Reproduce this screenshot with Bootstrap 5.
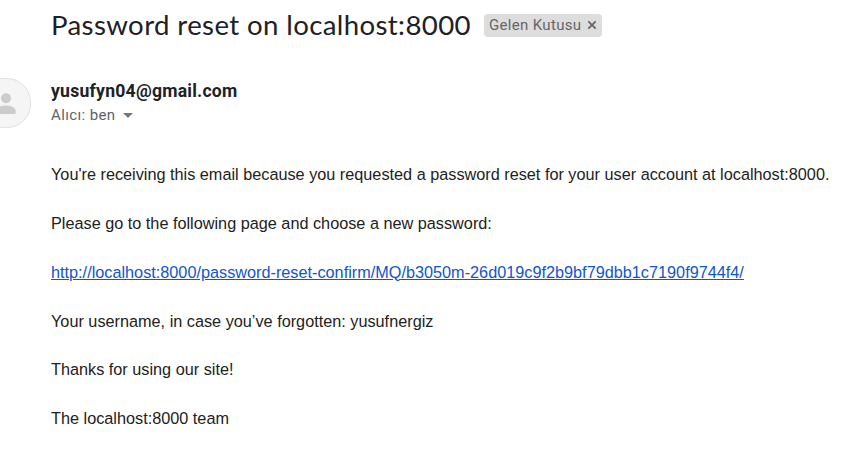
<!DOCTYPE html>
<html lang="tr">
<head>
<meta charset="utf-8">
<title>Password reset on localhost:8000</title>
<link href="https://cdn.jsdelivr.net/npm/bootstrap@5.3.0/dist/css/bootstrap.min.css" rel="stylesheet">
<style>
html,body{height:454px;overflow:hidden}
body{background:#fff;color:#202124}
.mail{width:856px;height:454px}
.subject{height:50px;padding-left:51px}
.subject-text{font:400 27.6px/34px "Lato",sans-serif;letter-spacing:.38px;width:419px;margin:0;white-space:nowrap;color:#202124}
.folder{width:118px;height:23px;margin-left:14px;padding:0 5px;background:#ddd;border-radius:4px;color:#666;font:400 15px/23px Roboto,sans-serif;letter-spacing:.33px;white-space:nowrap}
.sender{height:78px;padding-top:28px}
.avatar{width:31px;height:50px;flex:none}
.who{padding:1px 0 0 20px}
.from{font:700 17.6px/24px Roboto,sans-serif;letter-spacing:.23px;color:#202124}
.to{font:400 15px/24px Roboto,sans-serif;letter-spacing:.37px;color:#5f6368}
.message{font:400 16.25px/24.4px "Liberation Sans",Arial,sans-serif;padding:34px 0 0 51px;color:#222}
.message p{margin:0 0 24.4px;white-space:nowrap}
.message p:nth-child(4){padding-top:.5px;margin-bottom:23.9px}
.message a{color:#15c}
</style>
</head>
<body>
<main class="mail">
<header class="subject d-flex align-items-center">
<h1 class="subject-text"><span>Password reset on localhost:8000</span></h1>
<div class="folder d-flex align-items-center justify-content-between"><span>Gelen Kutusu</span><svg width="10" height="10" viewBox="0 0 10 10"><path d="M1.3 1.3 8.7 8.7M8.7 1.3 1.3 8.7" stroke="#666" stroke-width="1.8"/></svg></div>
</header>
<section class="sender d-flex">
<svg class="avatar" viewBox="0 0 31 50"><rect x="-20" y=".5" width="50.5" height="49" rx="23.5" fill="#f5f5f5" stroke="#e0e0e0"/><circle cx="6" cy="20.2" r="5" fill="#ccc"/><path d="M-4 36v-3c0-4 6-5.500 10-5.500s9.700 1.500 9.700 5.500v3z" fill="#ccc"/></svg>
<div class="who"><div class="from"><span>yusufyn04@gmail.com</span></div>
<div class="to d-flex align-items-center"><span>Alıcı: ben</span><svg class="ms-2" width="10" height="5"><path d="M0 0h10L5 5z" fill="#777"/></svg></div></div>
</section>
<article class="message">
<p><span>You're receiving this email because you requested a password reset for your user account at localhost:8000.</span></p>
<p><span>Please go to the following page and choose a new password:</span></p>
<p><a href="#">http://localhost:8000/password-reset-confirm/MQ/b3050m-26d019c9f2b9bf79dbb1c7190f9744f4/</a></p>
<p><span>Your username, in case you’ve forgotten: yusufnergiz</span></p>
<p><span>Thanks for using our site!</span></p>
<p><span>The localhost:8000 team</span></p>
</article>
</main>
<script src="https://cdn.jsdelivr.net/npm/bootstrap@5.3.0/dist/js/bootstrap.bundle.min.js"></script>
</body>
</html>
